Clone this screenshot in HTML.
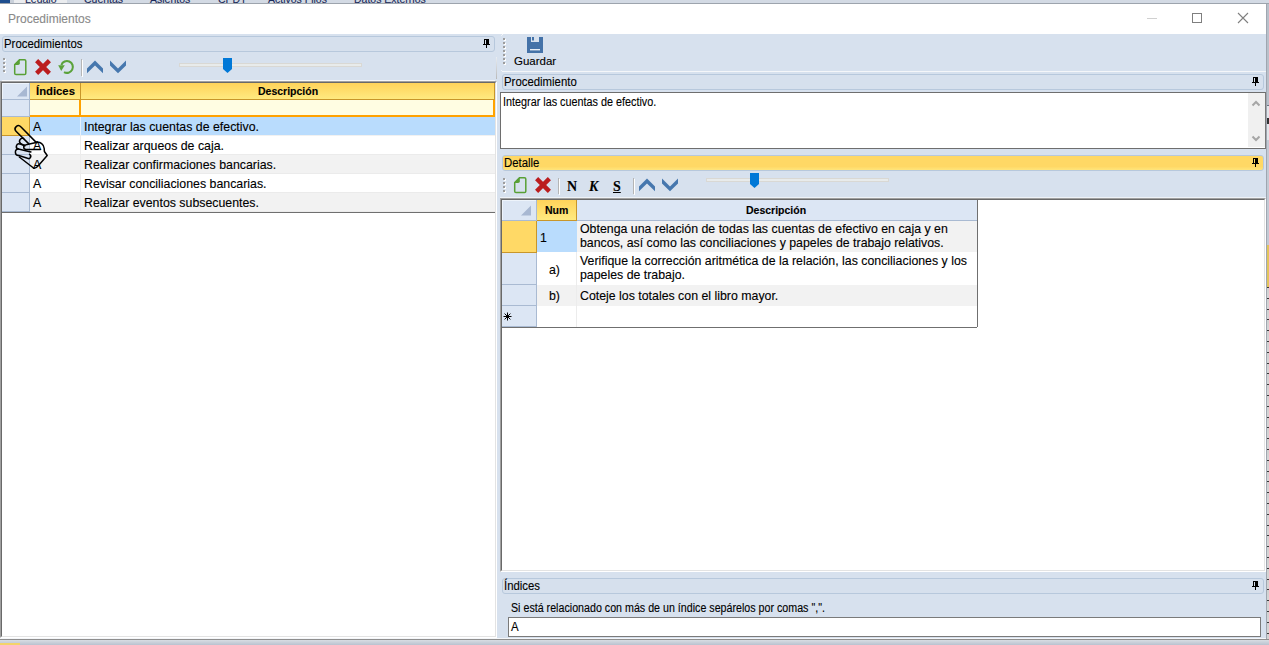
<!DOCTYPE html>
<html><head><meta charset="utf-8">
<style>
.pin{position:absolute;width:8px;height:10px}
.pin i{position:absolute;display:block;background:#000}

*{box-sizing:border-box;margin:0;padding:0}
html,body{width:1269px;height:645px;overflow:hidden;background:#fff}
body{position:relative;font-family:"Liberation Sans",sans-serif;color:#000}
.a{position:absolute}
.t{position:absolute;white-space:nowrap;line-height:1;-webkit-text-stroke:0.12px currentColor}
.hb{position:absolute;border:1px solid #b7c8dc;border-radius:3px;background:#d6e0ed}
.grip{position:absolute;width:3px}
.grip i{position:absolute;left:0;width:2px;height:2px;background:#9d9d9d;box-shadow:1px 1px 0 #fff}
.g12{font-size:12.35px}
.hs{font-size:12.5px;transform:scaleX(.91);transform-origin:0 0}
</style></head><body>

<!-- top tab strip -->
<div class="a" style="left:0;top:0;width:1269px;height:4px;background:#d3dae4"></div>
<div class="a" style="left:0;top:0;width:10px;height:3px;background:#1f4f8f"></div>
<div class="a" style="left:10px;top:0;width:4px;height:3px;background:#c9d0da"></div>
<div class="a" style="left:14px;top:0;width:53px;height:3px;background:#eaecef"></div>
<div class="a" style="left:0;top:0;width:1269px;height:3px;overflow:hidden">
  <div class="t" style="left:25px;top:-6px;font-size:10.5px;color:#1b2a5a">Legajo</div>
  <div class="t" style="left:84px;top:-6px;font-size:10.5px;color:#1b2a5a">Cuentas</div>
  <div class="t" style="left:150px;top:-6px;font-size:10.5px;color:#1b2a5a">Asientos</div>
  <div class="t" style="left:218px;top:-6px;font-size:10.5px;color:#1b2a5a">CPDT</div>
  <div class="t" style="left:268px;top:-6px;font-size:10.5px;color:#1b2a5a">Activos Fijos</div>
  <div class="t" style="left:354px;top:-6px;font-size:10.5px;color:#1b2a5a">Datos Externos</div>
</div>
<div class="a" style="left:0;top:3px;width:1269px;height:1px;background:#9da4ad"></div>

<!-- title bar -->
<div class="a" style="left:0;top:4px;width:1266px;height:30px;background:#fff"></div>
<div class="t" style="left:8px;top:13px;font-size:12px;color:#8a8a8a">Procedimientos</div>
<div class="a" style="left:1147px;top:18px;width:10px;height:1px;background:#d0d0d0"></div>
<div class="a" style="left:1192px;top:13px;width:10px;height:10px;border:1px solid #7f7f7f"></div>
<svg class="a" style="left:1237px;top:12px" width="12" height="12" viewBox="0 0 12 12"><path d="M1 1L11 11M11 1L1 11" stroke="#7f7f7f" stroke-width="1.1" fill="none"/></svg>

<!-- main bg -->
<div class="a" style="left:0;top:34px;width:1266px;height:604px;background:#d7e1ee"></div>
<!-- window right border / outside -->
<div class="a" style="left:1266px;top:4px;width:1px;height:635px;background:#9fa6b0"></div>
<div class="a" style="left:1267px;top:4px;width:2px;height:101px;background:#b9c0ca"></div>
<div class="a" style="left:1267px;top:105px;width:2px;height:1px;background:#6d7580"></div>
<div class="a" style="left:1267px;top:106px;width:2px;height:34px;background:#e2e5e9"></div>
<div class="a" style="left:1267px;top:118px;width:2px;height:6px;background:#333"></div>
<div class="a" style="left:1267px;top:140px;width:2px;height:105px;background:#c3cad4"></div>
<div class="a" style="left:1267px;top:245px;width:2px;height:42px;background:#e2c45c"></div>
<div class="a" style="left:1267px;top:287px;width:2px;height:352px;background:repeating-linear-gradient(#3a3a3a 0,#3a3a3a 1px,#d0d0d0 1px,#d6d6d6 10.8px)"></div>
<!-- bottom -->
<div class="a" style="left:0;top:638px;width:1266px;height:1px;background:#f4f6f9"></div>
<div class="a" style="left:0;top:639px;width:1269px;height:1px;background:#8e8e8e"></div>
<div class="a" style="left:0;top:640px;width:1269px;height:5px;background:linear-gradient(#d9dde3,#b9c2cf)"></div>
<div class="a" style="left:0;top:643px;width:20px;height:2px;background:#f3d36a"></div>

<!-- ================= LEFT PANEL ================= -->
<div class="hb" style="left:2px;top:36px;width:493px;height:16px"></div>
<div class="t hs" style="left:4px;top:38px">Procedimientos</div>
<div class="pin" style="left:483px;top:39px"><i style="left:1px;top:0;width:5px;height:1px"></i><i style="left:1px;top:0;width:1px;height:6px"></i><i style="left:3px;top:0;width:3px;height:6px"></i><i style="left:0;top:5px;width:7px;height:1px"></i><i style="left:3px;top:6px;width:1px;height:3px"></i></div>

<!-- left toolbar -->
<div class="grip" style="left:3px;top:58px;height:16px"><i style="top:0"></i><i style="top:4px"></i><i style="top:8px"></i><i style="top:12px"></i></div>
<svg class="a" style="left:13px;top:58px" width="15" height="18" viewBox="0 0 15 18"><path d="M6.5 1.7H11.5Q12.8 1.7 12.8 3V15.3Q12.8 16.6 11.5 16.6H3Q1.7 16.6 1.7 15.3V6.6Z" fill="none" stroke="#58a035" stroke-width="1.5"/><path d="M1 6.9L6.8 1.1V5.2Q6.8 6.9 5.1 6.9Z" fill="#58a035"/></svg>
<svg class="a" style="left:35px;top:59px" width="16" height="16" viewBox="0 0 16 16"><path d="M1.6 1.6L14.4 14.4M14.4 1.6L1.6 14.4" stroke="#bb1d1e" stroke-width="4.4" stroke-linecap="butt"/></svg>
<svg class="a" style="left:58px;top:59px" width="17" height="16" viewBox="0 0 17 16"><path d="M3.4 6A5.9 5.9 0 1 1 6 13.1" fill="none" stroke="#5aa23a" stroke-width="2.1"/><path d="M0.2 6.3L6.8 6.3L3.2 12Z" fill="#5aa23a"/></svg>
<div class="a" style="left:81px;top:59px;width:1px;height:17px;background:#b5b5b5"></div>
<div class="a" style="left:82px;top:60px;width:1px;height:17px;background:#fff"></div>
<svg class="a" style="left:87px;top:60px" width="17" height="14" viewBox="0 0 17 14"><path d="M0 8.5L8 0.6L16 8.5V13.3L8 5.4L0 13.3Z" fill="#4677ae"/></svg>
<svg class="a" style="left:110px;top:60px" width="17" height="14" viewBox="0 0 17 14"><path d="M0 0.6L8 8.5L16 0.6V5.4L8 13.3L0 5.4Z" fill="#4677ae"/></svg>
<!-- slider -->
<div class="a" style="left:179px;top:63px;width:183px;height:4px;background:#e8ebeb;border:1px solid #d9d8d4"></div>
<svg class="a" style="left:222px;top:57px" width="11" height="17" viewBox="0 0 11 17"><path d="M1 1H10V12L5.5 16L1 12Z" fill="#0078d7"/></svg>
<div class="a" style="left:2px;top:80px;width:493px;height:1px;background:#f5f7fa"></div>

<!-- left grid -->
<div class="a" style="left:0;top:81px;width:497px;height:557px;background:#fff;border-top:1px solid #a0a0a0;border-left:1px solid #a0a0a0;border-right:1px solid #fff;border-bottom:1px solid #fff">
  <div class="a" style="left:0;top:0;width:495px;height:555px;border-top:1px solid #696969;border-left:1px solid #696969;border-right:1px solid #e3e3e3;border-bottom:1px solid #e3e3e3"></div>
</div>
<!-- grid header -->
<div class="a" style="left:2px;top:83px;width:28px;height:17px;background:#dce6f4;border-right:1px solid #a9bad2;border-bottom:1px solid #a9bad2;box-shadow:inset 1px 1px 0 #eef4fb"></div>
<svg class="a" style="left:16px;top:86px" width="12" height="11" viewBox="0 0 12 11"><path d="M1 10.5L11 0.5V10.5Z" fill="#a8b8d2"/></svg>
<div class="a" style="left:30px;top:83px;width:51px;height:17px;background:linear-gradient(#ffd35a,#ffea80);border-right:1px solid #c8962a;border-bottom:1px solid #c8962a"></div>
<div class="a" style="left:81px;top:83px;width:414px;height:17px;background:linear-gradient(#ffd35a,#ffea80);border-right:1px solid #c8962a;border-bottom:1px solid #c8962a"></div>
<div class="t" style="left:36px;top:86px;font-size:11.3px;font-weight:bold">Índices</div>
<div class="t" style="left:258px;top:86px;font-size:10.5px;font-weight:bold">Descripción</div>
<!-- filter row -->
<div class="a" style="left:2px;top:100px;width:28px;height:17px;background:#dce6f4;border-right:1px solid #a9bad2;border-bottom:1px solid #a9bad2"></div>
<div class="a" style="left:30px;top:100px;width:465px;height:17px;background:#fffde2;border-bottom:2px solid #ffa200"></div>
<div class="a" style="left:79px;top:100px;width:2px;height:15px;background:#ffa200"></div>
<div class="a" style="left:493px;top:100px;width:2px;height:15px;background:#ffa200"></div>
<!-- rows -->
<div class="a" style="left:2px;top:117px;width:28px;height:19px;background:#ffd966;border-right:1px solid #c8962a;border-bottom:1px solid #c8962a"></div>
<div class="a" style="left:30px;top:117px;width:465px;height:18px;background:#b9dcfd"></div>
<div class="a" style="left:2px;top:136px;width:28px;height:19px;background:#dce6f4;border-right:1px solid #a9bad2;border-bottom:1px solid #a9bad2"></div>
<div class="a" style="left:2px;top:155px;width:28px;height:19px;background:#dce6f4;border-right:1px solid #a9bad2;border-bottom:1px solid #a9bad2"></div>
<div class="a" style="left:2px;top:174px;width:28px;height:19px;background:#dce6f4;border-right:1px solid #a9bad2;border-bottom:1px solid #a9bad2"></div>
<div class="a" style="left:2px;top:193px;width:28px;height:19px;background:#dce6f4;border-right:1px solid #a9bad2;border-bottom:1px solid #a9bad2"></div>
<div class="a" style="left:30px;top:155px;width:465px;height:18px;background:#f2f2f2"></div>
<div class="a" style="left:30px;top:193px;width:465px;height:18px;background:#f2f2f2"></div>
<div class="a" style="left:30px;top:135px;width:465px;height:1px;background:#f1f1f1"></div><div class="a" style="left:30px;top:154px;width:465px;height:1px;background:#ebebeb"></div><div class="a" style="left:30px;top:173px;width:465px;height:1px;background:#ebebeb"></div><div class="a" style="left:30px;top:192px;width:465px;height:1px;background:#ebebeb"></div><div class="a" style="left:30px;top:211px;width:465px;height:1px;background:#ebebeb"></div>
<div class="a" style="left:80px;top:117px;width:1px;height:18px;background:#e6f1fc"></div><div class="a" style="left:80px;top:135px;width:1px;height:77px;background:#ececec"></div>
<div class="a" style="left:2px;top:212px;width:493px;height:1px;background:#6f6f6f"></div>
<div class="t g12" style="left:33px;top:121px">A</div>
<div class="t g12" style="left:84px;top:121px">Integrar las cuentas de efectivo.</div>
<div class="t g12" style="left:33px;top:140px">A</div>
<div class="t g12" style="left:84px;top:140px">Realizar arqueos de caja.</div>
<div class="t g12" style="left:33px;top:159px">A</div>
<div class="t g12" style="left:84px;top:159px">Realizar confirmaciones bancarias.</div>
<div class="t g12" style="left:33px;top:178px">A</div>
<div class="t g12" style="left:84px;top:178px">Revisar conciliaciones bancarias.</div>
<div class="t g12" style="left:33px;top:197px">A</div>
<div class="t g12" style="left:84px;top:197px">Realizar eventos subsecuentes.</div>

<!-- splitter -->
<div class="a" style="left:496px;top:57px;width:1px;height:22px;background:linear-gradient(#e9edf2,#b9b9b9)"></div>

<!-- ================= RIGHT PANEL ================= -->
<!-- toolbar -->
<div class="grip" style="left:503px;top:38px;height:28px"><i style="top:0"></i><i style="top:4px"></i><i style="top:8px"></i><i style="top:12px"></i><i style="top:16px"></i><i style="top:20px"></i><i style="top:24px"></i></div>
<svg class="a" style="left:527px;top:37px" width="16" height="16" viewBox="0 0 16 16"><path d="M0 0H4V5H12V0H16V16H0Z" fill="#4472a8"/><rect x="5" y="0" width="2" height="3.5" fill="#4472a8"/><rect x="3" y="12" width="10" height="1.4" fill="#e8eef6"/></svg>
<div class="t" style="left:514px;top:56px;font-size:11.5px">Guardar</div>
<div class="a" style="left:502px;top:71px;width:764px;height:1px;background:#f4f6f9"></div><div class="a" style="left:501px;top:70px;width:1px;height:1px;background:#eef2f7"></div><div class="a" style="left:502px;top:34px;width:1px;height:1px;background:#f4f6f9"></div><div class="a" style="left:501px;top:35px;width:1px;height:1px;background:#eef2f7"></div>

<!-- Procedimiento header -->
<div class="hb" style="left:502px;top:74px;width:762px;height:16px"></div>
<div class="t hs" style="left:504px;top:76px">Procedimiento</div>
<div class="pin" style="left:1252px;top:77px"><i style="left:1px;top:0;width:5px;height:1px"></i><i style="left:1px;top:0;width:1px;height:6px"></i><i style="left:3px;top:0;width:3px;height:6px"></i><i style="left:0;top:5px;width:7px;height:1px"></i><i style="left:3px;top:6px;width:1px;height:3px"></i></div>

<!-- textarea -->
<div class="a" style="left:500px;top:92px;width:766px;height:57px;background:#fff;border:1px solid #6e6e6e;border-right-color:#7a7a7a"></div>
<div class="t" style="left:503px;top:96px;font-size:12.5px;transform:scaleX(.865);transform-origin:0 0">Integrar las cuentas de efectivo.</div>
<div class="a" style="left:1248px;top:93px;width:17px;height:54px;background:#f0f0f0"></div>
<svg class="a" style="left:1251px;top:99px" width="10" height="8" viewBox="0 0 10 8"><path d="M1.5 6.5L5 3L8.5 6.5" fill="none" stroke="#a6a6a6" stroke-width="2"/></svg>
<svg class="a" style="left:1251px;top:135px" width="10" height="8" viewBox="0 0 10 8"><path d="M1.5 1.5L5 5L8.5 1.5" fill="none" stroke="#a6a6a6" stroke-width="2"/></svg>

<!-- Detalle header -->
<div class="a" style="left:502px;top:155px;width:762px;height:16px;border:1px solid #b7c8dc;border-radius:3px;background:linear-gradient(#ffd865 75%,#ffe57c)"></div>
<div class="t hs" style="left:504px;top:157px">Detalle</div>
<div class="pin" style="left:1252px;top:158px"><i style="left:1px;top:0;width:5px;height:1px"></i><i style="left:1px;top:0;width:1px;height:6px"></i><i style="left:3px;top:0;width:3px;height:6px"></i><i style="left:0;top:5px;width:7px;height:1px"></i><i style="left:3px;top:6px;width:1px;height:3px"></i></div>

<!-- Detalle toolbar -->
<div class="grip" style="left:503px;top:178px;height:16px"><i style="top:0"></i><i style="top:4px"></i><i style="top:8px"></i><i style="top:12px"></i></div>
<svg class="a" style="left:513px;top:176px" width="15" height="18" viewBox="0 0 15 18"><path d="M6.5 1.7H11.5Q12.8 1.7 12.8 3V15.3Q12.8 16.6 11.5 16.6H3Q1.7 16.6 1.7 15.3V6.6Z" fill="none" stroke="#58a035" stroke-width="1.5"/><path d="M1 6.9L6.8 1.1V5.2Q6.8 6.9 5.1 6.9Z" fill="#58a035"/></svg>
<svg class="a" style="left:535px;top:177px" width="16" height="16" viewBox="0 0 16 16"><path d="M1.6 1.6L14.4 14.4M14.4 1.6L1.6 14.4" stroke="#bb1d1e" stroke-width="4.4" stroke-linecap="butt"/></svg>
<div class="a" style="left:558px;top:178px;width:1px;height:16px;background:#b5b5b5"></div>
<div class="a" style="left:559px;top:179px;width:1px;height:16px;background:#fff"></div>
<div class="t" style="left:567px;top:180px;font-family:'Liberation Serif',serif;font-weight:bold;font-size:14px">N</div>
<div class="t" style="left:589px;top:180px;font-family:'Liberation Serif',serif;font-weight:bold;font-style:italic;font-size:14px">K</div>
<div class="t" style="left:613px;top:180px;font-family:'Liberation Serif',serif;font-weight:bold;font-size:14px;text-decoration:underline">S</div>
<div class="a" style="left:633px;top:178px;width:1px;height:16px;background:#b5b5b5"></div>
<div class="a" style="left:634px;top:179px;width:1px;height:16px;background:#fff"></div>
<svg class="a" style="left:639px;top:178px" width="17" height="14" viewBox="0 0 17 14"><path d="M0 8.5L8 0.6L16 8.5V13.3L8 5.4L0 13.3Z" fill="#4677ae"/></svg>
<svg class="a" style="left:662px;top:178px" width="17" height="14" viewBox="0 0 17 14"><path d="M0 0.6L8 8.5L16 0.6V5.4L8 13.3L0 5.4Z" fill="#4677ae"/></svg>
<div class="a" style="left:706px;top:178px;width:183px;height:4px;background:#e8ebeb;border:1px solid #d9d8d4"></div>
<svg class="a" style="left:749px;top:172px" width="11" height="17" viewBox="0 0 11 17"><path d="M1 1H10V12L5.5 16L1 12Z" fill="#0078d7"/></svg>
<div class="a" style="left:500px;top:197px;width:766px;height:1px;background:#eef2f7"></div>

<!-- detail grid control -->
<div class="a" style="left:500px;top:198px;width:766px;height:374px;background:#fff;border-top:1px solid #a0a0a0;border-left:1px solid #a0a0a0;border-right:1px solid #fff;border-bottom:1px solid #fff">
  <div class="a" style="left:0;top:0;width:764px;height:372px;border-top:1px solid #696969;border-left:1px solid #696969;border-right:1px solid #e3e3e3;border-bottom:1px solid #e3e3e3"></div>
</div>
<!-- header -->
<div class="a" style="left:502px;top:200px;width:35px;height:21px;background:#dce6f4;border-right:1px solid #a9bad2;border-bottom:1px solid #a9bad2;box-shadow:inset 1px 1px 0 #eef4fb"></div>
<svg class="a" style="left:520px;top:205px" width="12" height="11" viewBox="0 0 12 11"><path d="M1 10.5L11 0.5V10.5Z" fill="#a8b8d2"/></svg>
<div class="a" style="left:537px;top:200px;width:40px;height:21px;background:linear-gradient(#ffd35a,#ffea80);border-right:1px solid #c8962a;border-bottom:1px solid #c8962a"></div>
<div class="a" style="left:577px;top:200px;width:401px;height:21px;background:#dce6f4;border-right:1px solid #a9bad2;border-bottom:1px solid #a9bad2"></div>
<div class="t" style="left:545px;top:205px;font-size:10.5px;font-weight:bold">Num</div>
<div class="t" style="left:746px;top:205px;font-size:10.5px;font-weight:bold">Descripción</div>
<!-- rows -->
<div class="a" style="left:502px;top:221px;width:35px;height:32px;background:#ffd966;border-right:1px solid #c8962a;border-bottom:1px solid #c8962a"></div>
<div class="a" style="left:537px;top:221px;width:40px;height:31px;background:#b9dcfd"></div>
<div class="a" style="left:577px;top:221px;width:400px;height:31px;background:#f2f2f2"></div>
<div class="a" style="left:502px;top:253px;width:35px;height:32px;background:#dce6f4;border-right:1px solid #a9bad2;border-bottom:1px solid #a9bad2"></div>
<div class="a" style="left:502px;top:285px;width:35px;height:21px;background:#dce6f4;border-right:1px solid #a9bad2;border-bottom:1px solid #a9bad2"></div>
<div class="a" style="left:537px;top:285px;width:440px;height:21px;background:#f2f2f2"></div>
<div class="a" style="left:502px;top:306px;width:35px;height:21px;background:#dce6f4;border-right:1px solid #a9bad2;border-bottom:1px solid #a9bad2"></div>
<div class="a" style="left:576px;top:252px;width:1px;height:75px;background:#ececec"></div>
<div class="a" style="left:977px;top:200px;width:1px;height:127px;background:#6f6f6f"></div>
<div class="a" style="left:502px;top:327px;width:475px;height:1px;background:#6f6f6f"></div>
<div class="t g12" style="left:540px;top:232px">1</div>
<div class="t g12" style="left:580px;top:223px">Obtenga una relación de todas las cuentas de efectivo en caja y en</div>
<div class="t g12" style="left:580px;top:237px">bancos, así como las conciliaciones y papeles de trabajo relativos.</div>
<div class="t g12" style="left:549px;top:264px">a)</div>
<div class="t g12" style="left:580px;top:255px">Verifique la corrección aritmética de la relación, las conciliaciones y los</div>
<div class="t g12" style="left:580px;top:269px">papeles de trabajo.</div>
<div class="t g12" style="left:549px;top:290px">b)</div>
<div class="t g12" style="left:580px;top:290px">Coteje los totales con el libro mayor.</div>
<svg class="a" style="left:503px;top:312px" width="9" height="9" viewBox="0 0 9 9"><path d="M4.5 0.5V8.5M0.5 4.5H8.5M1.6 1.6L7.4 7.4M7.4 1.6L1.6 7.4" stroke="#000" stroke-width="1"/></svg>

<!-- Índices header -->
<div class="hb" style="left:502px;top:578px;width:762px;height:16px"></div>
<div class="t hs" style="left:504px;top:580px">Índices</div>
<div class="pin" style="left:1252px;top:581px"><i style="left:1px;top:0;width:5px;height:1px"></i><i style="left:1px;top:0;width:1px;height:6px"></i><i style="left:3px;top:0;width:3px;height:6px"></i><i style="left:0;top:5px;width:7px;height:1px"></i><i style="left:3px;top:6px;width:1px;height:3px"></i></div>
<div class="t" style="left:511px;top:602px;font-size:12px;transform:scaleX(.89);transform-origin:0 0">Si está relacionado con más de un índice sepárelos por comas ",".</div>
<div class="a" style="left:508px;top:617px;width:753px;height:20px;background:#fff;border:1px solid #7a7a7a"></div>
<div class="t" style="left:511px;top:620px;font-size:13px;transform:scaleX(.88);transform-origin:0 0">A</div>

<!-- hand cursor -->
<svg class="a" style="left:8px;top:119px" width="42" height="52" viewBox="0 0 42 52" fill="none" stroke="#000" stroke-width="1.5" stroke-linecap="round" stroke-linejoin="round">
<path d="M28.2 23.4L12.8 7.8A3.2 3.2 0 0 0 8 12.2L20.6 24.6"/>
<path d="M15.6 19.4A3 3 0 0 0 12.5 24.4L16.9 26.9"/>
<path d="M28.2 23.4L18.1 25.7A2.4 2.4 0 0 0 18.1 30.5L32.4 30.6"/>
<path d="M15.6 26.3L11.6 24.9A2.6 2.6 0 0 0 10.4 30.1L22.9 32.9"/>
<path d="M10.4 30.1A3.2 3.2 0 0 0 10.8 36.5L19.5 39.3A2 2 0 0 0 21.5 35.3"/>
<path d="M28.2 23.4C32.5 22.8 35.8 25 36.2 29.5L36.4 32.5L39.2 36.5L30.5 46.4Q27.5 49.8 25.5 49L11.3 38"/>
</svg>

</body></html>
